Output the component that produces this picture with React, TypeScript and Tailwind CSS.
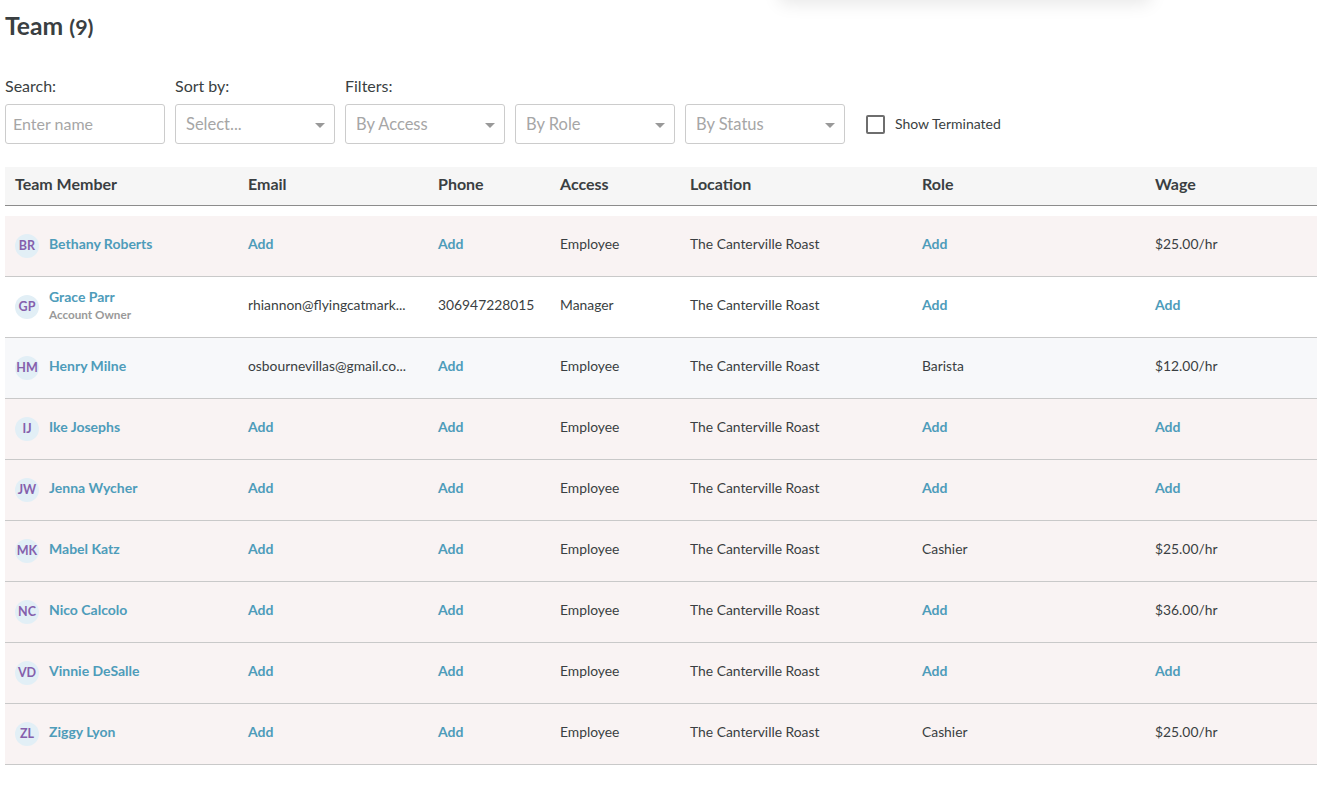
const columns = "grid grid-cols-[233px_190px_122px_130px_232px_233px_172px] items-center"

interface Member {
  initials: string
  name: string
  note?: string
  email?: string
  phone?: string
  access: string
  role?: string
  wage?: string
  bg: string
}

const members: Member[] = [
  { initials: "BR", name: "Bethany Roberts", access: "Employee", wage: "$25.00/hr", bg: "bg-[#f9f3f3]" },
  { initials: "GP", name: "Grace Parr", note: "Account Owner", email: "rhiannon@flyingcatmark...", phone: "306947228015", access: "Manager", bg: "bg-white" },
  { initials: "HM", name: "Henry Milne", email: "osbournevillas@gmail.co...", access: "Employee", role: "Barista", wage: "$12.00/hr", bg: "bg-[#f7f8fa]" },
  { initials: "IJ", name: "Ike Josephs", access: "Employee", bg: "bg-[#f9f3f3]" },
  { initials: "JW", name: "Jenna Wycher", access: "Employee", bg: "bg-[#f9f3f3]" },
  { initials: "MK", name: "Mabel Katz", access: "Employee", role: "Cashier", wage: "$25.00/hr", bg: "bg-[#f9f3f3]" },
  { initials: "NC", name: "Nico Calcolo", access: "Employee", wage: "$36.00/hr", bg: "bg-[#f9f3f3]" },
  { initials: "VD", name: "Vinnie DeSalle", access: "Employee", bg: "bg-[#f9f3f3]" },
  { initials: "ZL", name: "Ziggy Lyon", access: "Employee", role: "Cashier", wage: "$25.00/hr", bg: "bg-[#f9f3f3]" },
]

function Select({ label }: { label: string }) {
  return (
    <div className="flex h-10 w-40 items-center justify-between rounded-[3px] border border-[#cccccc] bg-white pl-[10px] pr-[9px] text-[16.5px] text-[#a6a6a6]">
      <span>{label}</span>
      <svg width="10" height="5" viewBox="0 0 10 5" className="mt-[3px]">
        <path d="M0 0h10L5 5z" fill="#999999" />
      </svg>
    </div>
  )
}

function Cell({ value }: { value?: string }) {
  return (
    <div className="pl-[10px]">
      {value ? (
        <span className="block pb-[3px]">{value}</span>
      ) : (
        <span className="block pb-[5px] text-[14px] font-bold text-[#4e9cba]">Add</span>
      )}
    </div>
  )
}

function Row({ member }: { member: Member }) {
  return (
    <div className={`${columns} h-[61px] border-b border-[#c9c9c9] text-[13.85px] text-[#3a3f42] ${member.bg}`}>
      <div className="flex items-center gap-[10px] pl-[10px]">
        <div className="flex size-6 shrink-0 items-center justify-center rounded-full bg-[#e2eff6] pt-px text-[12.5px] font-bold text-[#8560ac]">
          {member.initials}
        </div>
        <div className={member.note ? "flex flex-col pb-[4px]" : "flex flex-col pb-[5px]"}>
          <span className="text-[14px] font-bold leading-[17px] text-[#4e9cba]">{member.name}</span>
          {member.note && <span className="text-[11.7px] font-bold leading-[18px] text-[#999999]">{member.note}</span>}
        </div>
      </div>
      <Cell value={member.email} />
      <Cell value={member.phone} />
      <div className="pb-[3px] pl-[10px]">{member.access}</div>
      <div className="pb-[3px] pl-[10px]">The Canterville Roast</div>
      <Cell value={member.role} />
      <Cell value={member.wage} />
    </div>
  )
}

export default function App() {
  const headers = ["Team Member", "Email", "Phone", "Access", "Location", "Role", "Wage"]

  return (
    <div className="relative min-h-[809px] overflow-hidden bg-white pl-[5px] font-['Lato','Liberation_Sans',sans-serif] text-[#3a3f42]">
      {/* sombra del menu que queda arriba */}
      <div className="absolute -top-10 left-[780px] h-10 w-[370px] shadow-[0_3px_18px_rgba(0,0,0,0.1)]" />

      <h1 className="pt-[11px] text-[24.7px] font-bold leading-[30px]">
        Team <span className="text-[21.5px]">(9)</span>
      </h1>

      <div className="mt-[35px] flex items-end gap-[10px]">
        <div className="flex flex-col gap-[9px]">
          <label className="text-[16px] leading-[18px]">Search:</label>
          <div className="flex h-10 w-40 items-center rounded-[3px] border border-[#cccccc] pb-px pl-[7px] text-[16px] text-[#a6a6a6]">Enter name</div>
        </div>
        <div className="flex flex-col gap-[9px]">
          <label className="text-[16px] leading-[18px]">Sort by:</label>
          <Select label="Select..." />
        </div>
        <div className="flex flex-col gap-[9px]">
          <label className="text-[16px] leading-[18px]">Filters:</label>
          <Select label="By Access" />
        </div>
        <Select label="By Role" />
        <Select label="By Status" />
        <div className="ml-[11px] flex h-10 items-center gap-[10px] text-[14px]">
          <div className="size-[19px] rounded-[2px] border-2 border-[#6e6e6e]" />
          <span className="pb-[2px]">Show Terminated</span>
        </div>
      </div>

      <div className={`${columns} mt-[23px] h-[39px] border-b border-[#8c8c8c] bg-[#f6f6f6] pb-[5px] text-[16px] font-bold`}>
        {headers.map((header) => (
          <div key={header} className="pl-[10px]">{header}</div>
        ))}
      </div>

      <div className="mt-[10px]">
        {members.map((member) => (
          <Row key={member.initials} member={member} />
        ))}
      </div>
    </div>
  )
}
